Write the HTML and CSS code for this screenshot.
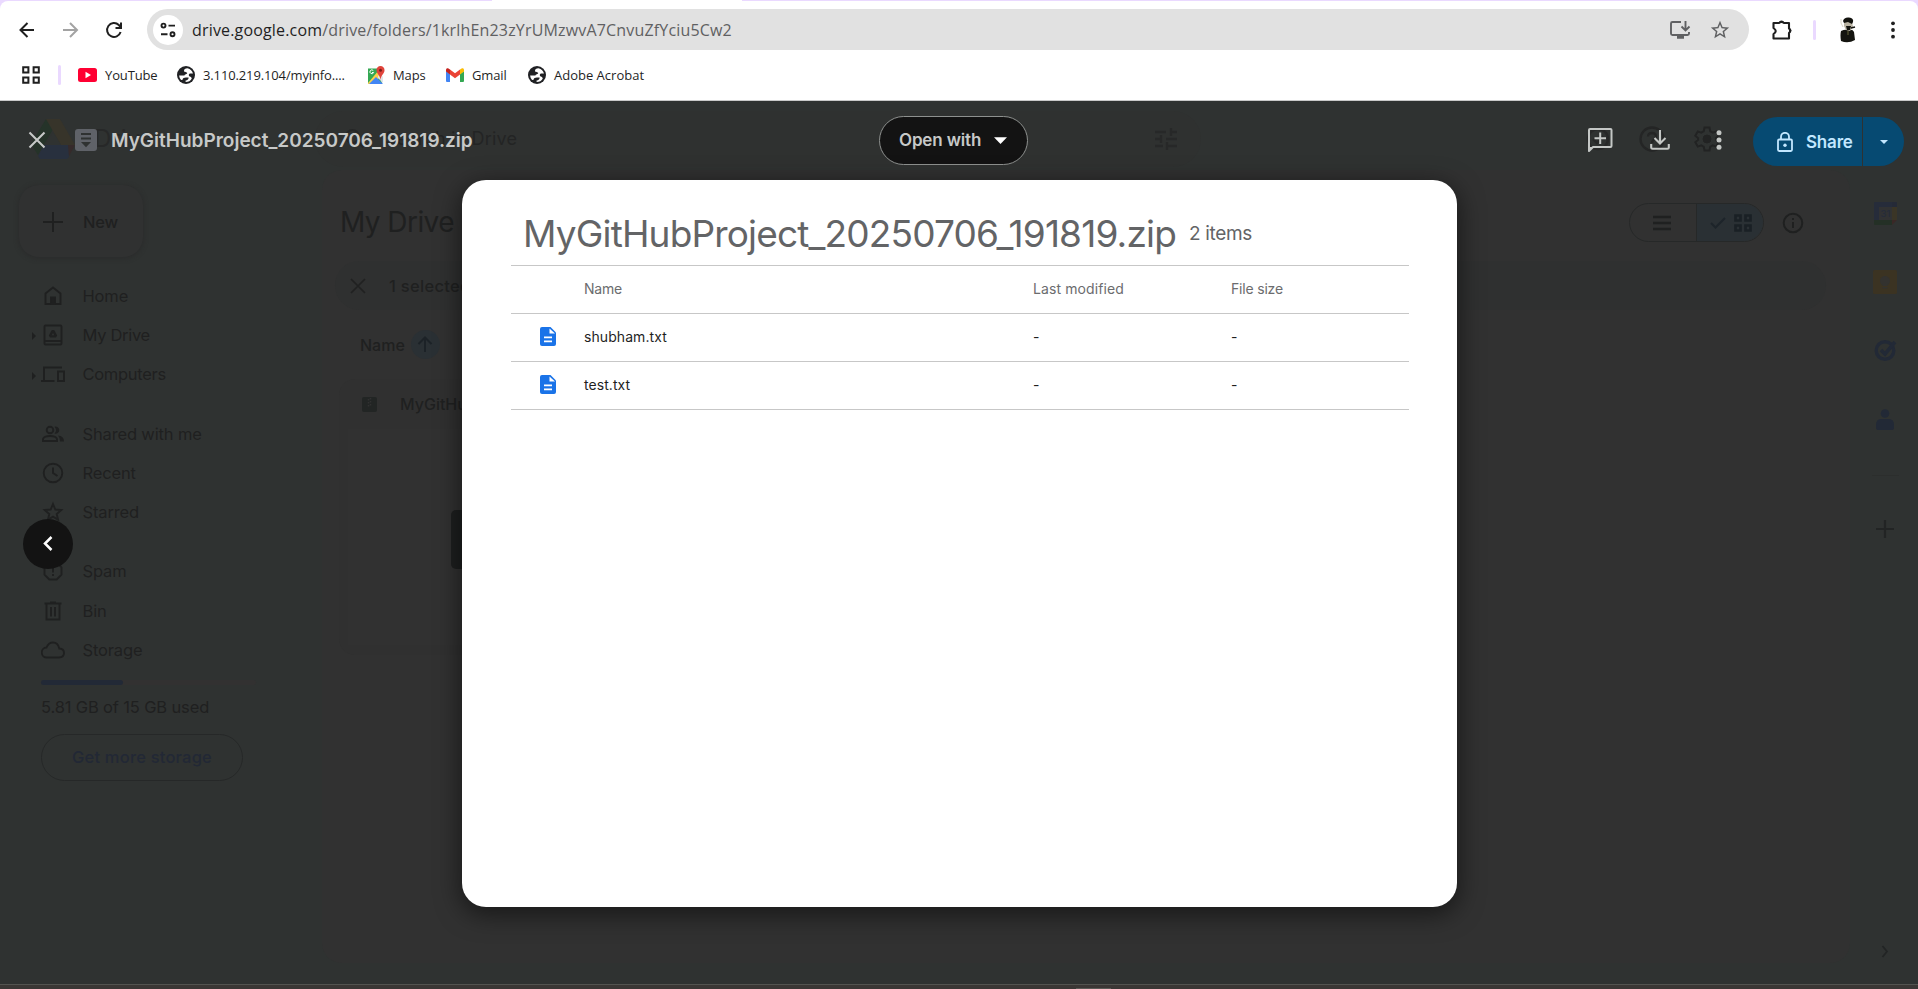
FILE: index.html
```html
<!DOCTYPE html>
<html lang="en">
<head>
<meta charset="utf-8">
<title>MyGitHubProject_20250706_191819.zip - Google Drive</title>
<link rel="stylesheet" href="styles.css">
</head>
<body>
<div class="browser">
  <div class="tabstrip"></div>
  <div class="toolbar">
    <svg class="tool back" width="24" height="24" viewBox="0 0 24 24" fill="none" stroke="#1f1f1f" stroke-width="2"><path d="M20 12H7M13.500 5l-7 7 7 7"/></svg>
    <svg class="tool fwd" width="24" height="24" viewBox="0 0 24 24" fill="none" stroke="#a3a3a3" stroke-width="2"><path d="M5 12H18.500M12 5l7 7-7 7"/></svg>
    <svg class="tool reload" width="24" height="24" viewBox="0 0 24 24" fill="none" stroke="#1f1f1f" stroke-width="2"><path d="M18.600 14a6.900 6.900 0 1 1-1.800-7l1.800 2M19 4.500V10h-5.500"/></svg>
    <div class="omnibox">
      <span class="site"><svg width="18" height="18" viewBox="0 0 18 18" fill="none" stroke="#1f1f1f" stroke-width="1.900"><circle cx="4.500" cy="4.600" r="2"/><path d="M9.500 4.600H16M2 13.200h6.500"/><circle cx="13.500" cy="13.200" r="2"/></svg></span>
      <span class="url"><b>drive.google.com</b>/drive/folders/1krlhEn23zYrUMzwvA7CnvuZfYciu5Cw2</span>
      <svg class="install" width="22" height="20" viewBox="0 0 22 20" fill="none" stroke="#5f6062" stroke-width="1.900"><path d="M12 2H3.500Q2 2 2 3.500v10Q2 15 3.500 15h15q1.500 0 1.500-1.500V12M16.500 1v9M12.500 6.500l4 4 4-4"/><path d="M8 17h7" stroke-width="3.500"/></svg>
      <svg class="star" width="22" height="22" viewBox="0 0 24 24" fill="#5f6062"><path d="M22 9.240l-7.190-.62L12 2 9.190 8.630 2 9.240l5.460 4.730L5.820 21 12 17.270 18.180 21l-1.630-7.030zM12 15.400l-3.760 2.270 1-4.280-3.320-2.880 4.380-.38L12 6.100l1.710 4.040 4.380.38-3.320 2.880 1 4.280z"/></svg>
    </div>
    <svg class="ext" width="22" height="22" viewBox="0 0 22 22"><path d="M2.500 4H8q2.500-2 5 0h5v5.500q2.500 2 0 4.500v5.500H2.500V15q4.500-3 0-6z" fill="none" stroke="#1f1f1f" stroke-width="2.100" stroke-linejoin="round"/><path d="M8 4a2.400 2.400 0 0 1 5 0zM18 9a2.500 2.500 0 0 1 0 5z" fill="#1f1f1f"/></svg>
    <i class="sep"></i>
    <svg class="avatar" width="18" height="26" viewBox="0 0 18 26"><path d="M2 14q4-2 7-1 5-1 6 2l1 8q-7 4-14 1-1-6 0-10z" fill="#14140f"/><path d="M5 5l8 0 1 5-3 4-4-1-2-4z" fill="#b9b3a2"/><path d="M4 4q1-4 6-3.500T14 5l-1 2-4-2-4 1zM7 9l5 0-1 4-3 0z" fill="#12120e"/><path d="M2 2q-1 4 2 8" stroke="#d9d6c8" fill="none"/><path d="M9 14v4" stroke="#4b4a2c" stroke-width="1.500"/><path d="M12 11l4-1" stroke="#12120e" stroke-width="1.500"/></svg>
    <svg class="kebab" width="6" height="18" viewBox="0 0 6 18" fill="#1f1f1f"><circle cx="3" cy="2.300" r="1.900"/><circle cx="3" cy="9" r="1.900"/><circle cx="3" cy="15.700" r="1.900"/></svg>
  </div>
  <div class="bookmarks">
    <svg class="apps" width="18" height="18" viewBox="0 0 18 18" fill="none" stroke="#1f1f1f" stroke-width="2"><path d="M1.200 1.200h5.200v5.200H1.200zM11.600 1.200h5.200v5.200h-5.200zM1.200 11.600h5.200v5.200H1.200zM11.600 11.600h5.200v5.200h-5.200z"/></svg>
    <i class="sep"></i>
    <a class="bm bm1"><svg width="19" height="14" viewBox="0 0 19 14"><rect width="19" height="14" rx="2.500" fill="#ff0033"/><path d="M7.500 3.800v6.400L13 7z" fill="#fff"/></svg><span>YouTube</span></a>
    <a class="bm bm2"><svg width="18" height="18" viewBox="0 0 18 18"><use href="#globe"/></svg><span>3.110.219.104/myinfo....</span></a>
    <a class="bm bm3"><svg width="18" height="18" viewBox="0 0 18 18"><path d="M1 2.500h10l4 15H1z" fill="#34a853"/><path d="M1 17L12 4l3 5-9 9H1z" fill="#fbd14b"/><path d="M2 18l7-7 7 7z" fill="#4285f4"/><path d="M11 10l3-2 2 3v6l-5-5z" fill="#e3e5e8"/><path d="M13.500 0A4 4 0 0 0 9.500 4.200C9.500 7.500 13 9 13.500 14c.5-5 4-6.500 4-9.800A4 4 0 0 0 13.500 0z" fill="#e0443b"/><circle cx="13.500" cy="4.200" r="1.500" fill="#7c1d19"/><path d="M6.300 4.600A1.900 1.900 0 1 0 6.600 6.500H5" fill="none" stroke="#fff"/></svg><span>Maps</span></a>
    <a class="bm bm4"><svg width="18" height="14" viewBox="0 0 18 14"><path d="M0 3l4 3v8H1q-1 0-1-1z" fill="#4285f4"/><path d="M18 3l-4 3v8h3q1 0 1-1z" fill="#34a853"/><path d="M14 1.500l2-1.200q2-.6 2 1.700v1.500l-4 3z" fill="#fbbc04"/><path d="M4 1.500L2 .3Q0-.3 0 2v1.500l4 3z" fill="#c5221f"/><path d="M4 1.500l5 3.800 5-3.800v5l-5 3.800-5-3.800z" fill="#ea4335"/></svg><span>Gmail</span></a>
    <a class="bm bm5"><svg width="18" height="18" viewBox="0 0 18 18"><use href="#globe"/></svg><span>Adobe Acrobat</span></a>
  </div>
</div>

<main class="stage">
  <div class="drive">
    <header class="dhead">
      <svg class="dlogo" width="45" height="40" viewBox="0 0 45 40"><path d="M15 0h13l-7 12L7 36 0 25z" fill="#253329"/><path d="M15 0h14l15 26H30z" fill="#37342a"/><path d="M30 26h14l-7 13z" fill="#362a2a"/><path d="M13 26h24l1 12-2 2H9l-2-3z" fill="#28303e"/><path d="M22 13l8 13H14z" fill="#2f3231"/></svg>
      <span class="dname">Drive</span>
      <div class="search">
        <svg width="24" height="24" viewBox="0 0 24 24" fill="none" stroke="#262727" stroke-width="2.200"><circle cx="9.500" cy="9.500" r="6.500"/><path d="M14.500 14.500l6 6"/></svg>
        <span>Search in Drive</span>
        <svg class="tune" width="24" height="24" viewBox="0 0 24 24" fill="none" stroke="#272828" stroke-width="2.300"><path d="M1 5h11M17 5h6M17 1v8M1 12h6M12 12h11M7 8v8M1 19h8M13 19h10M13 15v8"/></svg>
      </div>
      <svg class="ready" width="24" height="24" viewBox="0 0 24 24" fill="none" stroke="#272828" stroke-width="2.500"><circle cx="12" cy="12" r="10"/><path d="M7 12l4 4 6-7"/></svg>
      <svg class="help" width="26" height="26" viewBox="0 0 26 26" fill="none" stroke="#242525" stroke-width="2.300"><circle cx="13" cy="13" r="11.500"/><path d="M9 10.500q.2-3.500 4-3.500t4 3.500c0 3-4 3-4 6.500"/></svg>
      <svg class="gear" width="28" height="28" viewBox="0 0 28 28" fill="none" stroke="#222323"><path d="M11.500 2.500h5l.7 3.600 2.500 1.500 3.500-1.200 2.500 4.300-2.800 2.400v1.800l2.800 2.400-2.500 4.300-3.500-1.200-2.500 1.500-.7 3.600h-5l-.7-3.600-2.500-1.500-3.500 1.200-2.500-4.300 2.800-2.400v-1.800L2.300 10.700l2.500-4.300 3.500 1.200 2.500-1.500z" stroke-width="2"/><circle cx="14" cy="14" r="4" fill="#222323"/></svg>
    </header>
    <div class="dbody">
      <nav class="side">
        <div class="new"><svg width="20" height="20" viewBox="0 0 20 20" stroke="#1f2020" stroke-width="2"><path d="M10 0v20M0 10h20"/></svg><span>New</span></div>
        <a class="it"><svg viewBox="0 0 24 24"><path d="M4.500 20V9.500L12 3.500l7.500 6V20z"/><path d="M10 20v-6.500h4V20z" fill="#1f2020"/></svg><span>Home</span></a>
        <a class="it sub"><svg viewBox="0 0 24 24"><rect x="3.500" y="2.500" width="17" height="19" rx="1"/><path d="M3 18h18"/><path d="M10.800 7h2.400l3 5.500-1.200 2H9l-1.200-2z" fill="#1f2020" stroke="none"/><path d="M12 10l1.300 2.300h-2.600z" fill="#2f3231" stroke="none"/></svg><span>My Drive</span></a>
        <a class="it sub"><svg viewBox="0 0 24 24"><path d="M3 18V5.500h18M0 19h13.500M17 9.500h6V19h-6z"/></svg><span>Computers</span></a>
        <a class="it gap"><svg viewBox="0 0 24 24"><circle cx="9" cy="8" r="3.300"/><path d="M2 19v-2q1-3 7-3t7 3v2z"/><path d="M13.500 4.700a3.600 3.600 0 1 1 0 6.800q3-3 0-6.800zM17 13.500q6 .6 6 6h-4q0-4-2-6z" fill="#1f2020" stroke="none"/></svg><span>Shared with me</span></a>
        <a class="it"><svg viewBox="0 0 24 24"><circle cx="12" cy="12" r="9.300"/><path d="M12 6.500V12l4.500 3"/></svg><span>Recent</span></a>
        <a class="it"><svg viewBox="0 0 24 24"><path d="M12 4l2.300 5.500 6 .5-4.600 4 1.400 5.800L12 16.700l-5.100 3.100L8.300 14l-4.600-4 6-.5z"/></svg><span>Starred</span></a>
        <a class="it gap"><svg viewBox="0 0 24 24"><path d="M8.300 3.500h7.400l4.800 4.800v7.400l-4.800 4.800H8.300l-4.800-4.800V8.300zM12 7v6.500M12 15v2"/></svg><span>Spam</span></a>
        <a class="it"><svg viewBox="0 0 24 24"><path d="M5.500 5v15.500h13V5M3.500 4.500h17M9 3.500h6M10 8v9.500M14 8v9.500"/></svg><span>Bin</span></a>
        <a class="it"><svg viewBox="0 0 24 24"><path d="M6 19.500a5 5 0 0 1-.5-10Q7.500 4.500 12 4.500q5 0 6.300 6 4.700.3 4.700 4.500t-5 4.500z"/></svg><span>Storage</span></a>
        <div class="quota"><i></i></div>
        <span class="used">5.81 GB of 15 GB used</span>
        <div class="more"><span>Get more storage</span></div>
      </nav>
      <section class="panel">
        <div class="phead">
          <h1>My Drive</h1>
          <div class="toggle">
            <span class="list"><svg width="18" height="16" viewBox="0 0 18 16" stroke="#1f2020" stroke-width="2.300"><path d="M0 2h18M0 8h18M0 14h18"/></svg></span>
            <span class="grid"><svg width="16" height="12" viewBox="0 0 16 12" fill="none" stroke="#1d242a" stroke-width="2"><path d="M1 6l4.500 4.500L15 1"/></svg><svg width="18" height="18" viewBox="0 0 18 18" fill="none" stroke="#1a2025" stroke-width="2.600"><path d="M1.500 1.500h5v5h-5zM11.500 1.500h5v5h-5zM1.500 11.500h5v5h-5zM11.500 11.500h5v5h-5z"/></svg></span>
          </div>
          <svg class="info" width="22" height="22" viewBox="0 0 22 22" fill="none" stroke="#1f2020" stroke-width="2"><circle cx="11" cy="11" r="9.300"/><path d="M11 10v6M11 6v2"/></svg>
        </div>
        <div class="selbar"><svg width="16" height="16" viewBox="0 0 16 16" stroke="#202121" stroke-width="1.700"><path d="M1 1l14 14M15 1L1 15"/></svg><span>1 selected</span></div>
        <div class="sort"><span>Name</span><b><svg width="16" height="17" viewBox="0 0 16 17" fill="none" stroke="#1c2227" stroke-width="2"><path d="M8 16V2M1.500 8L8 1.500 14.500 8"/></svg></b></div>
        <div class="filecard">
          <div class="fname"><svg width="15" height="15" viewBox="0 0 15 15"><rect width="15" height="15" rx="2" fill="#222524"/><path d="M8.500 1v9M6.500 2v8" stroke="#313131" stroke-width="1.500" stroke-dasharray="1.500 1.500"/></svg><span>MyGitHubProject_20250706_191819.zip</span></div>
          <div class="preview"><i></i></div>
        </div>
      </section>
      <aside class="rail">
        <svg class="r1" width="23" height="23" viewBox="0 0 23 23"><path d="M0 1q0-1 1-1h18v5H5v13H0z" fill="#262c3a"/><path d="M5 5h13v13H5z" fill="#313233"/><path d="M18 5h5v13h-5z" fill="#3a3526"/><path d="M19 0h3q1 0 1 1v4h-5V0z" fill="#252a37"/><path d="M0 18h18v5H1q-1 0-1-1z" fill="#243026"/><path d="M18 18h5l-5 5z" fill="#3a2826"/><text x="11.500" y="15" text-anchor="middle" class="cal">31</text></svg>
        <svg class="r2" width="24" height="24" viewBox="0 0 24 24"><rect width="24" height="24" rx="1.500" fill="#3b3322"/><circle cx="12" cy="11" r="5" fill="#33322f"/><path d="M9.500 13h5v3h-5zM9.500 17h5v1.500h-5z" fill="#33322f"/></svg>
        <svg class="r3" width="24" height="22" viewBox="0 0 24 22" fill="none" stroke="#222936"><circle cx="12" cy="11.500" r="8.800" stroke-width="3.400"/><path d="M8 11l4 4 10-12" stroke-width="3.600"/></svg>
        <svg class="r4" width="18" height="21" viewBox="0 0 18 21" fill="#222936"><circle cx="9" cy="4.500" r="4.300"/><path d="M0 16q0-6 5-6h8q5 0 5 6v3q0 2-2 2H2q-2 0-2-2z"/></svg>
        <i class="rule"></i>
        <svg class="r5" width="18" height="18" viewBox="0 0 18 18" stroke="#222424" stroke-width="2.200"><path d="M9 0v18M0 9h18"/></svg>
        <svg class="r6" width="8" height="13" viewBox="0 0 8 13" fill="none" stroke="#222424" stroke-width="1.800"><path d="M1.500 1l4.500 5.500L1.500 12"/></svg>
      </aside>
    </div>
  </div>

  <div class="viewer">
    <div class="vbar">
      <svg class="close" width="18" height="18" viewBox="0 0 18 18" stroke="#c7c9c8" stroke-width="2.100"><path d="M1.500 1.500l15 15M16.500 1.500l-15 15"/></svg>
      <svg class="zip" width="22" height="22" viewBox="0 0 22 22"><rect width="22" height="22" rx="3" fill="#5f6268"/><path d="M6 5h10M6 9.500h10" stroke="#2f3231" stroke-width="2"/><path d="M6 13h10l-5 5.200z" fill="#2f3231"/></svg>
      <span class="vtitle">MyGitHubProject_20250706_191819.zip</span>
      <div class="open"><span>Open with</span><svg width="13" height="7" viewBox="0 0 13 7" fill="#fff"><path d="M0 .3h13L6.500 7z"/></svg></div>
      <svg class="cmt" width="26" height="26" viewBox="0 0 26 26" fill="none" stroke="#c4c7c5" stroke-width="2"><path d="M2 24V3q0-1 1-1h20.500q1 0 1 1v16q0 1-1 1H6z" stroke-linejoin="round"/><path d="M2 24l4-4H2z" fill="#c4c7c5" stroke="none"/><path d="M13.200 5.500v11.500M7.500 11.300H19"/></svg>
      <svg class="dl" width="20" height="20" viewBox="0 0 20 20" fill="none" stroke="#c4c7c5" stroke-width="2.100"><path d="M10 0v13M4.500 8l5.500 5.500L15.500 8M1.200 14v3.500q0 1.300 1.300 1.300h15q1.300 0 1.300-1.300V14"/></svg>
      <svg class="dots" width="6" height="20" viewBox="0 0 6 20" fill="#c4c7c5"><circle cx="3" cy="2.700" r="2.500"/><circle cx="3" cy="10" r="2.500"/><circle cx="3" cy="17.300" r="2.500"/></svg>
      <div class="share">
        <div class="sbtn"><svg width="16" height="20" viewBox="0 0 16 20" fill="none" stroke="#c2e7ff" stroke-width="1.800"><rect x="1" y="7.500" width="14" height="11.500" rx="1.200"/><path d="M4 7V4.800a4 4 0 0 1 8 0V7"/><circle cx="8" cy="13.200" r="1.700" fill="#c2e7ff" stroke="none"/></svg><span>Share</span></div>
        <div class="sarr"><svg width="8" height="4" viewBox="0 0 8 4" fill="#c2e7ff"><path d="M0 0h8L4 4z"/></svg></div>
      </div>
    </div>
    <div class="prev"><svg width="10" height="15" viewBox="0 0 10 15" fill="none" stroke="#fff" stroke-width="2.500"><path d="M8.500 1L2 7.500 8.500 14"/></svg></div>
    <article class="sheet">
      <div class="shead"><h2>MyGitHubProject_20250706_191819.zip</h2><span>2 items</span></div>
      <div class="row th"><i></i><span>Name</span><span class="lm">Last modified</span><span>File size</span></div>
      <div class="row"><svg width="16" height="19" viewBox="0 0 16 19"><use href="#doc"/></svg><span>shubham.txt</span><span>-</span><span>-</span></div>
      <div class="row last"><svg width="16" height="19" viewBox="0 0 16 19"><use href="#doc"/></svg><span>test.txt</span><span>-</span><span>-</span></div>
    </article>
  </div>
</main>
<footer class="taskbar"><i></i></footer>

<svg width="0" height="0" class="defs"><defs>
  <g id="globe"><circle cx="9" cy="9" r="9" fill="#202124"/><path d="M10.500 2.300Q7 2.500 7 4.700c0 2 3.200.8 3.200 2.400S7.500 8 7.500 9.600H2.100q.2 2.700 2 4.500l1.500-.3c0-1.500 1.500-2.300 3.400-2.300h2.600q0 2.700-3 2.900v1.600q4.400 0 6.200-3.500-.3-1.500-1.800-1.900-1-.3-1.200-1.400c-.2-1.300 1-1.700 2.200-1.700h2Q15 3.500 10.500 2.300z" fill="#fff"/></g>
  <g id="doc"><path d="M2 0h8.500L16 5.500V17q0 2-2 2H2q-2 0-2-2V2Q0 0 2 0z" fill="#1a73e8"/><path d="M9.500 1.500V6.500H15z" fill="#fff"/><path d="M4 10.300h8M4 14.300h8" stroke="#fff" stroke-width="1.800"/></g>
</defs></svg>
</body>
</html>
```
FILE: styles.css
```css
* { box-sizing: border-box; }
body { margin: 0; width: 1918px; height: 989px; overflow: hidden; display: flex; flex-direction: column; background: #2f3231; font-family: Inter, "Liberation Sans", sans-serif; }
svg { display: block; flex: none; }
.defs { position: absolute; }

.browser { height: 101px; flex: none; background: #ead9ff; border-bottom: 1px solid #c9c9c9; font-family: "Open Sans", "Noto Sans", sans-serif; }
.tabstrip { height: 1px; background: linear-gradient(90deg, #ead9ff 492px, #fff 492px, #fff 742px, #ead9ff 742px); }
.toolbar { height: 57px; display: flex; align-items: center; padding-left: 14px; background: #fff; border-radius: 8px 8px 0 0; }
.back { margin-right: 20px; }
.fwd { margin-right: 20px; }
.reload { margin-right: 21px; }
.omnibox { width: 1602px; height: 41px; border-radius: 21px; background: #e1e1e1; display: flex; align-items: center; padding-left: 6px; }
.site { width: 30px; height: 30px; border-radius: 50%; background: #fff; display: grid; place-items: center; margin-right: 9px; }
.url { width: 1477px; font-size: 16px; letter-spacing: .17px; color: #5f6062; }
.url b { font-weight: 400; color: #1f1f1f; }
.install { margin-right: 18px; }
.ext { margin-left: 22px; }
.sep { width: 3px; height: 20px; border-radius: 2px; background: #ead9ff; }
.toolbar .sep { margin: 0 23px 0 20px; }
.avatar { margin-right: 33px; }
.bookmarks { height: 42px; display: flex; align-items: center; padding: 0 0 8px 22px; background: #fff; }
.bookmarks .sep { margin: 0 17px 0 18px; }
.bm { display: flex; align-items: center; gap: 8px; font-size: 13px; letter-spacing: -.13px; color: #1f1f1f; white-space: nowrap; }
.bm1 { width: 99px; }
.bm2 { width: 190px; }
.bm3 { width: 79px; }
.bm4 { width: 82px; }
.bm5 { letter-spacing: 0; }

.stage { position: relative; height: 883px; flex: none; overflow: hidden; }
.drive { height: 883px; display: flex; flex-direction: column; color: #1f2020; }
.dhead { height: 69px; flex: none; display: flex; align-items: center; padding: 6px 0 0 31px; }
.dname { width: 239px; padding-left: 18px; font-size: 24px; color: #272828; }
.search { width: 886px; height: 56px; border-radius: 28px; background: #2f3130; display: flex; align-items: center; padding: 0 23px 0 28px; font-size: 18px; letter-spacing: .17px; color: #232424; }
.search span { margin-left: 18px; }
.tune { margin-left: auto; }
.ready { margin-left: 385px; }
.help { margin-left: 29px; }
.gear { margin-left: 28px; }
.dbody { flex: 1; display: flex; }

.side { width: 322px; display: flex; flex-direction: column; font-size: 16.500px; letter-spacing: -.15px; white-space: nowrap; }
.new { width: 124px; height: 72px; margin: 15px 0 19px 19px; padding: 2px 0 0 24px; border-radius: 20px; background: #303131; box-shadow: 0 1px 4px 1px #2b2c2c; display: flex; align-items: center; gap: 20px; font-weight: 500; }
.it { position: relative; height: 39.300px; display: flex; align-items: center; gap: 17.500px; padding-left: 41px; }
.it svg { width: 24px; height: 24px; fill: none; stroke: #1f2020; stroke-width: 1.900; }
.it.gap { margin-top: 20px; }
.sub { letter-spacing: -.3px; }
.sub::before { content: ""; position: absolute; left: 32px; top: 17px; border-left: 4px solid #1f2020; border-top: 4px solid transparent; border-bottom: 4px solid transparent; }
.quota { width: 215px; height: 5px; margin: 10px 0 0 41px; border-radius: 3px; background: #323131; }
.quota i { display: block; width: 82px; height: 5px; border-radius: 3px; background: #222936; }
.used { margin: 11px 0 0 41px; line-height: 22px; }
.more { width: 202px; height: 47px; margin: 16px 0 0 41px; border: 1px solid #262828; border-radius: 24px; display: grid; place-items: center; color: #222835; font-weight: 500; letter-spacing: .2px; }

.panel { width: 1528px; height: 793px; border-radius: 20px; background: #313131; padding: 14px 24px 0 13px; }
.phead { height: 77px; display: flex; align-items: center; }
.phead h1 { margin: 0; padding: 0 0 1px 5px; width: 1294px; font-size: 28px; font-weight: 400; letter-spacing: -.57px; }
.toggle { width: 135px; height: 39px; border: 1px solid #262828; border-radius: 20px; display: flex; overflow: hidden; }
.toggle span { display: flex; align-items: center; justify-content: center; }
.list { width: 67px; padding-right: 2px; border-right: 1px solid #262828; }
.grid { flex: 1; gap: 8px; padding-left: 2px; background: #2a3034; }
.info { margin-left: 18px; }
.selbar { height: 49px; border-radius: 25px; background: #2f3030; display: flex; align-items: center; padding-left: 15px; gap: 23px; font-size: 16.500px; font-weight: 500; letter-spacing: .3px; white-space: nowrap; }
.sort { height: 69px; display: flex; align-items: center; gap: 6px; padding-left: 25px; font-size: 16px; font-weight: 500; }
.sort b { width: 29px; height: 29px; border-radius: 50%; background: #2a3034; display: grid; place-items: center; }
.filecard { width: 340px; height: 276px; margin-left: 4px; border-radius: 16px; background: #303030; padding: 0 9px; }
.fname { height: 50px; display: flex; align-items: center; gap: 23px; padding-left: 14px; font-size: 16px; font-weight: 500; }
.fname span { width: 230px; overflow: hidden; text-overflow: ellipsis; white-space: nowrap; }
.preview { height: 216px; background: #313131; padding: 81px 0 0 103px; }
.preview i { display: block; width: 59px; height: 59px; border-radius: 5px; background: #1d1f1f; }

.rail { width: 68px; display: flex; flex-direction: column; align-items: center; padding: 32px 0 0 2px; }
.cal { font: 500 9.500px Inter, sans-serif; fill: #262c3a; }
.r2 { margin-top: 45px; }
.r3 { margin-top: 45px; }
.r4 { margin-top: 48px; }
.rule { width: 27px; height: 1px; margin-top: 45px; background: #2c2e2d; }
.r5 { margin-top: 44px; }
.r6 { margin-top: 407px; }

.viewer { position: absolute; inset: 0; }
.vbar { height: 78px; display: flex; align-items: center; padding: 0 14px 0 28px; color: #c7c9c8; font-weight: 600; white-space: nowrap; }
.zip { margin-left: 29px; }
.vtitle { width: 768px; margin-left: 14px; font-size: 19px; letter-spacing: 0; }
.open { width: 149px; height: 49px; border: 1px solid #8e918f; border-radius: 25px; background: #131313; display: flex; align-items: center; padding-left: 19px; gap: 13px; font-size: 17px; letter-spacing: -.15px; }
.cmt { margin-left: 559px; }
.dl { margin-left: 37px; }
.dots { margin-left: 46px; }
.share { height: 49px; margin: 3px 0 0 auto; display: flex; gap: 1px; font-size: 17px; letter-spacing: -.2px; color: #c2e7ff; }
.sbtn { width: 109px; background: #064a72; border-radius: 25px 0 0 25px; display: flex; align-items: center; gap: 13px; padding-left: 24px; }
.sarr { width: 41px; background: #064a72; border-radius: 0 25px 25px 0; display: grid; place-items: center; }
.prev { position: absolute; left: 23px; top: 418px; width: 50px; height: 50px; border-radius: 50%; background: #131313; display: grid; place-items: center; padding-bottom: 2px; }
.sheet { position: absolute; left: 462px; top: 79px; width: 995px; height: 727px; border-radius: 24px; background: #fff; box-shadow: 0 6px 24px 2px rgba(0, 0, 0, .5); padding: 22px 48px 0 49px; }
.shead { height: 63px; display: flex; align-items: center; padding-left: 12px; color: #636466; white-space: nowrap; }
.shead h2 { margin: 0; font-size: 37px; font-weight: 400; width: 666px; letter-spacing: -.83px; }
.shead span { font-size: 19px; letter-spacing: -.33px; }
.row { height: 48px; display: grid; grid-template-columns: 73px 449px 198px auto; align-items: center; padding-bottom: 2px; border-top: 1px solid #c7c7c7; font-size: 14px; letter-spacing: .07px; color: #1f1f1f; }
.row.last { height: 49px; border-bottom: 1px solid #c7c7c7; }
.row svg { margin-left: 29px; }
.th { color: #6b6c6e; letter-spacing: -.19px; }
.lm { letter-spacing: .11px; }

.taskbar { height: 5px; flex: none; background: #3b3735; border-top: 1px solid #535450; }
.taskbar i { display: block; width: 35px; height: 1px; margin: 3px 0 0 1076px; background: #5b5a56; }
```
